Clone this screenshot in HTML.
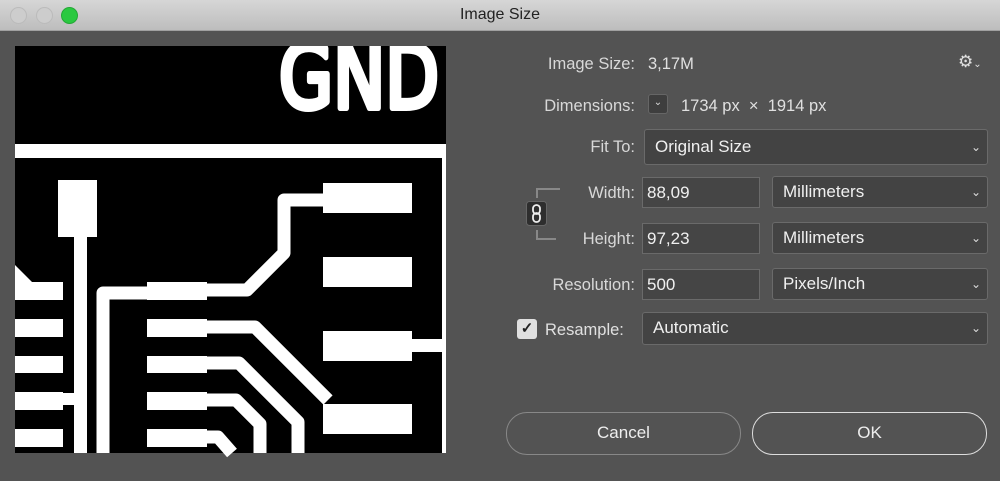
<!DOCTYPE html>
<html><head><style>
body{margin:0;width:1000px;height:481px;background:#535353;font-family:"Liberation Sans",sans-serif;position:relative;overflow:hidden}
.tb{position:absolute;left:0;top:0;width:1000px;height:30px;background:linear-gradient(#d6d6d6,#bdbdbd);border-bottom:1px solid #a0a0a0}
.tb .t{position:absolute;left:0;width:1000px;text-align:center;top:6px;font-size:16px;color:#222}
.dot{position:absolute;top:7px;width:15px;height:15px;border-radius:50%;background:#cdcdcd;border:0.5px solid #bbb}
.a{position:absolute;color:#e0e0e0;font-size:16.5px}
.l{position:absolute;right:365px;color:#d8d8d8;font-size:16.5px;text-align:right}
.f{position:absolute;background:#434343;border:1px solid #6a6a6a;border-radius:3px;box-sizing:border-box;color:#f0f0f0;font-size:17px;padding-left:10px;line-height:30px}
.f.i{border-radius:0;padding-left:4px;background:#454545}
.chev{position:absolute;right:6px;top:0;font-size:12px;color:#ddd}
.btn{position:absolute;border-radius:21px;box-sizing:border-box;text-align:center;color:#eee;font-size:17px;line-height:40px}
</style></head><body>
<div class="tb"><div class="dot" style="left:10px"></div><div class="dot" style="left:36px"></div><div class="dot" style="left:61px;background:#2ac940;border-color:#24a836"></div><div class="t">Image Size</div></div>
<svg style="position:absolute;left:0;top:0" width="460" height="481">
<rect x="15" y="46" width="431" height="407" fill="#000"/>
<svg x="15" y="46" width="431" height="98" overflow="hidden">
<text x="264" y="62" fill="#fff" stroke="#fff" stroke-width="6" stroke-linejoin="round" font-family="DejaVu Sans" font-size="88" textLength="160" lengthAdjust="spacingAndGlyphs">GND</text>
</svg>
<rect x="15" y="144" width="431" height="14" fill="#fff"/>
<rect x="442" y="158" width="4" height="295" fill="#fff"/>
<rect x="58" y="180" width="39" height="57" fill="#fff"/>
<rect x="74" y="237" width="13" height="216" fill="#fff"/>
<path d="M15 265 L32 282 L63 282 L63 300 L15 300Z" fill="#fff"/>
<rect x="15" y="319" width="48" height="18" fill="#fff"/>
<rect x="15" y="356" width="48" height="17" fill="#fff"/>
<rect x="15" y="392" width="48" height="18" fill="#fff"/>
<rect x="15" y="429" width="48" height="18" fill="#fff"/>
<rect x="63" y="393" width="11" height="12" fill="#fff"/>
<rect x="147" y="282" width="60" height="18" fill="#fff"/>
<rect x="147" y="319" width="60" height="18" fill="#fff"/>
<rect x="147" y="356" width="60" height="17" fill="#fff"/>
<rect x="147" y="392" width="60" height="18" fill="#fff"/>
<rect x="147" y="429" width="60" height="18" fill="#fff"/>
<g fill="none" stroke="#fff" stroke-width="13" stroke-linejoin="round">
<path d="M147 293 L103 293 L103 453"/>
<path d="M207 290 L247 290 L284 253 L284 200 L323 200"/>
<path d="M207 327 L255 327 L328 400"/>
<path d="M207 363 L239 363 L298 422 L298 453"/>
<path d="M207 400 L236 400 L260 424 L260 453"/>
<path d="M207 437 L218 437 L232 453"/>
</g>
<rect x="323" y="183" width="89" height="30" fill="#fff"/>
<rect x="323" y="257" width="89" height="30" fill="#fff"/>
<rect x="323" y="331" width="89" height="30" fill="#fff"/>
<rect x="323" y="404" width="89" height="30" fill="#fff"/>
<rect x="412" y="339" width="30" height="13" fill="#fff"/>
</svg>
<div class="l" style="top:55px">Image Size:</div><div class="a" style="left:648px;top:55px">3,17M</div>
<div class="a" style="left:958px;top:52px;font-size:17px">⚙<span style="font-size:10px">⌄</span></div>
<div class="l" style="top:97px">Dimensions:</div>
<div style="position:absolute;left:648px;top:94px;width:20px;height:20px;background:#3e3e3e;border:1px solid #666;border-radius:3px;box-sizing:border-box;color:#ddd;font-size:10px;text-align:center;line-height:16px">⌄</div>
<div class="a" style="left:681px;top:97px">1734 px &nbsp;×&nbsp; 1914 px</div>
<div class="l" style="top:138px">Fit To:</div>
<div class="f" style="left:644px;top:129px;width:344px;height:36px;line-height:34px">Original Size<span class="chev">⌄</span></div>
<div style="position:absolute;left:536px;top:188px;width:22px;height:8px;border-left:2px solid #888;border-top:2px solid #888"></div>
<div style="position:absolute;left:536px;top:230px;width:18px;height:8px;border-left:2px solid #888;border-bottom:2px solid #888"></div>
<svg style="position:absolute;left:526px;top:201px" width="21" height="25"><rect x="0.5" y="0.5" width="20" height="24" rx="3" fill="#2e2e2e" stroke="#666"/><g fill="none" stroke="#eee" stroke-width="1.8"><rect x="7" y="4" width="7" height="9" rx="3.5"/><rect x="7" y="12" width="7" height="9" rx="3.5"/></g></svg>
<div class="l" style="top:184px">Width:</div>
<div class="f i" style="left:642px;top:177px;width:118px;height:31px">88,09</div>
<div class="f" style="left:772px;top:176px;width:216px;height:32px">Millimeters<span class="chev">⌄</span></div>
<div class="l" style="top:230px">Height:</div>
<div class="f i" style="left:642px;top:223px;width:118px;height:31px">97,23</div>
<div class="f" style="left:772px;top:222px;width:216px;height:32px">Millimeters<span class="chev">⌄</span></div>
<div class="l" style="top:276px">Resolution:</div>
<div class="f i" style="left:642px;top:269px;width:118px;height:31px">500</div>
<div class="f" style="left:772px;top:268px;width:216px;height:32px">Pixels/Inch<span class="chev">⌄</span></div>
<div style="position:absolute;left:517px;top:319px;width:20px;height:20px;background:#e0e0e0;border-radius:3px;color:#222;font-size:15px;text-align:center;line-height:20px;font-weight:bold">✓</div>
<div class="a" style="left:545px;top:321px">Resample:</div>
<div class="f" style="left:642px;top:312px;width:346px;height:33px">Automatic<span class="chev">⌄</span></div>
<div class="btn" style="left:506px;top:412px;width:235px;height:43px;border:1px solid #888">Cancel</div>
<div class="btn" style="left:752px;top:412px;width:235px;height:43px;border:1.5px solid #ddd">OK</div>
</body></html>
